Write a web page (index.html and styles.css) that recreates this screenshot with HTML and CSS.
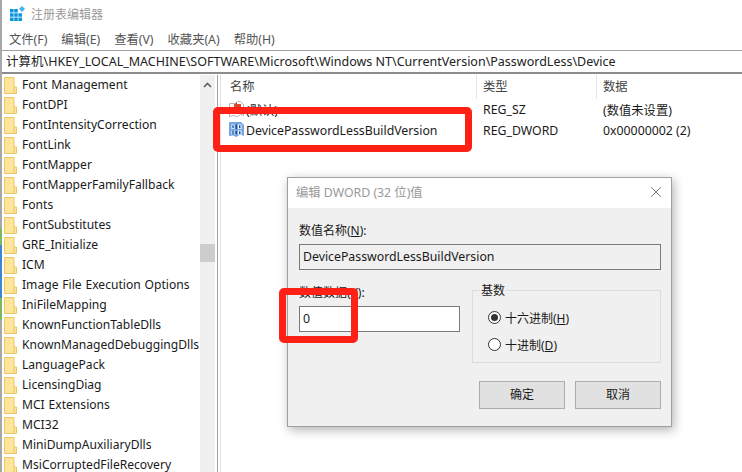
FILE: index.html
```html
<!DOCTYPE html>
<html lang="zh-CN">
<head>
  <meta charset="UTF-8">
  <title>注册表编辑器</title>
  <link rel="stylesheet" href="styles.css">
</head>
<body>

  <div class="app">
    <div class="titlebar">
      <svg class="app-icon" width="16" height="16" viewBox="0 0 16 16">
        <path fill="#0f94de" d="M0 3h3.600v3.600H0zM4.200 3h3.600v3.600H4.200zM0 7.200h3.600v3.600H0zM4.200 7.200h3.600v3.600H4.200zM8.400 7.200H12v3.600H8.400zM0 11.400h3.600V15H0zM4.200 11.400h3.600V15H4.200zM8.400 11.400H12V15H8.400z"/>
        <path fill="#45b4ea" d="M12 0l3 3-3 3-3-3z"/>
      </svg>
      <span>注册表编辑器</span>
    </div>

    <div class="menubar">
      <span>文件(F)</span>
      <span>编辑(E)</span>
      <span>查看(V)</span>
      <span>收藏夹(A)</span>
      <span>帮助(H)</span>
    </div>

    <div class="address">计算机\HKEY_LOCAL_MACHINE\SOFTWARE\Microsoft\Windows NT\CurrentVersion\PasswordLess\Device</div>

    <div class="panes">
      <div class="tree">
        <div class="tree-list" id="treeList"></div>
        <div class="scrollbar">
          <svg class="scroll-up" width="9" height="6" viewBox="0 0 9 6">
            <path d="M1 5l3.500-3.500L8 5" fill="none" stroke="#606060" stroke-width="1.600"/>
          </svg>
          <div class="scroll-thumb"></div>
        </div>
      </div>

      <div class="splitter"></div>

      <div class="values">
        <div class="value-head">
          <div class="col-name">名称</div>
          <div class="col-type">类型</div>
          <div class="col-data">数据</div>
        </div>
        <div class="value-row">
          <div class="col-name">
            <svg class="value-icon" width="15" height="16" viewBox="0 0 15 16">
              <path d="M0.500 2.500h6l2-2h3l3 3v11l-3-1-3 2-4-1-4 1z" fill="#fff" stroke="#b4b4b4"/>
              <path d="M5 6V3h1.500V1.500H8V3h4v3z" fill="#e0452c"/>
            </svg>
            <span>(默认)</span>
          </div>
          <div class="col-type">REG_SZ</div>
          <div class="col-data">(数值未设置)</div>
        </div>
        <div class="value-row">
          <div class="col-name">
            <svg class="value-icon" width="15" height="15" viewBox="0 0 15 15">
              <path d="M0 1q0-1 1-1h11l3 3v11l-4-1.500L7.500 15 4 13.500 0 14z" fill="#74a6e2"/>
              <path fill="#fff" d="M2.500 2.500h3v4.500h-3zM9 2.500h3.500v4.500H9zM2.500 8.500h3v4h-3zM9 8.500h3.500v4H9z"/>
              <path fill="#1c4f9c" d="M3.300 3.300H4.700V6.200H3.300zM6.500 2.500H8V7H6.500zM10 3.300h1.500V6.200H10zM3.300 8.500H4.700V12.500H3.300zM6.500 9H8v3H6.500zM10 9.300h1.500V12H10z"/>
            </svg>
            <span>DevicePasswordLessBuildVersion</span>
          </div>
          <div class="col-type">REG_DWORD</div>
          <div class="col-data">0x00000002 (2)</div>
        </div>
      </div>
    </div>

    <div class="dialog">
      <div class="dialog-title">
        <span>编辑 DWORD (32 位)值</span>
        <svg width="12" height="12" viewBox="0 0 12 12">
          <path d="M1 1l10 10M11 1L1 11" stroke="#808080" fill="none"/>
        </svg>
      </div>
      <div class="dialog-body">
        <div class="field-label">数值名称(<u>N</u>):</div>
        <div class="name-box">DevicePasswordLessBuildVersion</div>
        <div class="dialog-columns">
          <div class="data-col">
            <div class="field-label">数值数据(<u>V</u>):</div>
            <div class="data-box">0</div>
          </div>
          <div class="base-group">
            <div class="base-legend">基数</div>
            <div class="radio-row">
              <span class="radio checked"></span>
              <span>十六进制(<u>H</u>)</span>
            </div>
            <div class="radio-row">
              <span class="radio"></span>
              <span>十进制(<u>D</u>)</span>
            </div>
          </div>
        </div>
        <div class="dialog-buttons">
          <div class="btn">确定</div>
          <div class="btn">取消</div>
        </div>
      </div>
    </div>

    <div class="mark mark-row"></div>
    <div class="mark mark-input"></div>
  </div>

  <script>
    const keys = [
      "Font Management", "FontDPI", "FontIntensityCorrection", "FontLink", "FontMapper",
      "FontMapperFamilyFallback", "Fonts", "FontSubstitutes", "GRE_Initialize", "ICM",
      "Image File Execution Options", "IniFileMapping", "KnownFunctionTableDlls",
      "KnownManagedDebuggingDlls", "LanguagePack", "LicensingDiag", "MCI Extensions",
      "MCI32", "MiniDumpAuxiliaryDlls", "MsiCorruptedFileRecovery"
    ];

    const folder = `<svg class="folder" width="13" height="17" viewBox="0 0 13 17">
      <path d="M0.500 0.500h9.500v9.500h2.500v6.500h-12z" fill="#fde59c" stroke="#ecc862"/>
      <path d="M10 10v6" stroke="#ecc862"/>
    </svg>`;

    document.getElementById("treeList").innerHTML = keys
      .map(name => `<div class="tree-item">${folder}<span>${name}</span></div>`)
      .join("");
  </script>

</body>
</html>
```

FILE: styles.css
```css
html, body {
  margin: 0;
  padding: 0;
  overflow: hidden;
}

body {
  font-family: "Noto Sans", "Noto Sans CJK SC", sans-serif;
  font-size: 12.3px;
  color: #1a1a1a;
  background: #fff;
}

.app {
  position: relative;
  width: 742px;
  height: 472px;
  overflow: hidden;
  display: flex;
  flex-direction: column;
  box-sizing: border-box;
  border-left: 2px solid #a8a8a8;
  /* bits of the desktop showing at the window edge */
  border-image: linear-gradient(to bottom, #a8a8a8 228px, #7cb85c 228px, #7cb85c 245px, #3f86d0 245px, #3f86d0 298px, #7cb85c 298px, #7cb85c 320px, #a8a8a8 320px) 1;
}

.titlebar {
  height: 30px;
  box-sizing: border-box;
  padding: 0 0 2px 8px;
  display: flex;
  align-items: center;
  gap: 5px;
  font-size: 12px;
  color: #9a9a9a;
  flex-shrink: 0;
}

.menubar {
  height: 20px;
  box-sizing: border-box;
  padding: 0 0 2px 7px;
  display: flex;
  align-items: center;
  gap: 14px;
  color: #555;
  flex-shrink: 0;
}

.address {
  height: 21px;
  line-height: 21px;
  padding-left: 4px;
  font-size: 12.5px;
  border-top: 1px solid #a0a0a0;
  border-bottom: 2px solid #8c8c8c;
  color: #222;
  flex-shrink: 0;
  white-space: nowrap;
}

.panes {
  flex: 1;
  display: flex;
  min-height: 0;
  padding-top: 1px;
}

.tree {
  width: 213px;
  display: flex;
  flex-shrink: 0;
}

.tree-list {
  width: 198px;
  overflow: hidden;
  font-size: 12.1px;
  word-spacing: 0.7px;
}

.tree-item {
  height: 20px;
  display: flex;
  align-items: center;
  gap: 5px;
  padding-left: 2px;
  white-space: nowrap;
}

.tree-item span {
  padding-bottom: 2px;
}

.folder {
  flex-shrink: 0;
}

.scrollbar {
  position: relative;
  width: 15px;
  background: #f0f0f0;
}

.scroll-up {
  position: absolute;
  left: 3px;
  top: 7px;
}

.scroll-thumb {
  position: absolute;
  left: 0;
  top: 169px;
  width: 15px;
  height: 18px;
  background: #cdcdcd;
}

.splitter {
  width: 4px;
  margin-left: 2px;
  border-left: 1px solid #a0a0a0;
  border-right: 1px solid #e0e0e0;
  box-sizing: border-box;
  flex-shrink: 0;
}

.values {
  flex: 1;
}

.value-head,
.value-row {
  display: grid;
  grid-template-columns: 255px 120px 1fr;
  white-space: nowrap;
}

.value-head {
  height: 24px;
  align-items: center;
}

.value-head > div {
  height: 24px;
  line-height: 23px;
  padding-left: 9px;
  box-sizing: border-box;
  color: #444;
}

.value-head .col-type,
.value-head .col-data {
  border-left: 1px solid #e5e5e5;
  padding-left: 6px;
}

.value-row {
  height: 21px;
  align-items: center;
}

.value-row .col-name {
  display: flex;
  align-items: center;
  gap: 2px;
  padding-left: 8px;
}

.value-icon {
  margin-top: -2px;
}

.value-row .col-type,
.value-row .col-data {
  padding-left: 7px;
}

.dialog {
  position: absolute;
  left: 285px;
  top: 177px;
  width: 385px;
  height: 250px;
  box-sizing: border-box;
  border: 1px solid #a0a0a0;
  background: #f0f0f0;
  box-shadow: 2px 3px 10px rgba(0,0,0,0.3);
}

.dialog-title {
  height: 30px;
  box-sizing: border-box;
  padding: 0 9px 2px 8px;
  background: #fff;
  display: flex;
  align-items: center;
  justify-content: space-between;
  color: #999;
}

.dialog-body {
  padding: 14px 10px 0 11px;
}

.field-label {
  height: 16px;
  line-height: 17px;
  font-size: 12px;
}

.name-box {
  height: 26px;
  line-height: 23px;
  margin-top: 6px;
  padding-left: 3px;
  border: 1px solid #7a7a7a;
  box-sizing: border-box;
  background: #f0f0f0;
  white-space: nowrap;
}

.dialog-columns {
  display: flex;
  gap: 12px;
  margin-top: 20px;
}

.data-col {
  width: 161px;
  margin-top: -6px;
}

.data-box {
  height: 26px;
  line-height: 23px;
  margin-top: 6px;
  padding-left: 3px;
  border: 1px solid #7a7a7a;
  box-sizing: border-box;
  background: #fff;
}

.base-group {
  position: relative;
  width: 189px;
  height: 73px;
  box-sizing: border-box;
  border: 1px solid #dcdcdc;
  padding-top: 13px;
  padding-left: 15px;
  font-size: 12px;
}

.base-legend {
  position: absolute;
  left: 7px;
  top: -8px;
  padding: 0 1px;
  line-height: 16px;
  background: #f0f0f0;
}

.radio-row {
  height: 27px;
  display: flex;
  align-items: center;
  gap: 4px;
}

.radio {
  width: 13px;
  height: 13px;
  box-sizing: border-box;
  border: 1px solid #333;
  border-radius: 50%;
  background: #fff;
  display: flex;
  align-items: center;
  justify-content: center;
}

.radio.checked::after {
  content: "";
  width: 7px;
  height: 7px;
  border-radius: 50%;
  background: #333;
}

.dialog-buttons {
  display: flex;
  justify-content: flex-end;
  gap: 10px;
  margin-top: 18px;
}

.btn {
  width: 86px;
  height: 28px;
  line-height: 25px;
  text-align: center;
  font-size: 12px;
  box-sizing: border-box;
  border: 1px solid #adadad;
  background: #e1e1e1;
}

.mark {
  position: absolute;
  box-sizing: border-box;
  border: 7px solid #ff2116;
  border-radius: 5px;
}

.mark-row {
  left: 211px;
  top: 107px;
  width: 259px;
  height: 45px;
}

.mark-input {
  left: 277px;
  top: 288px;
  width: 79px;
  height: 55px;
}
```
